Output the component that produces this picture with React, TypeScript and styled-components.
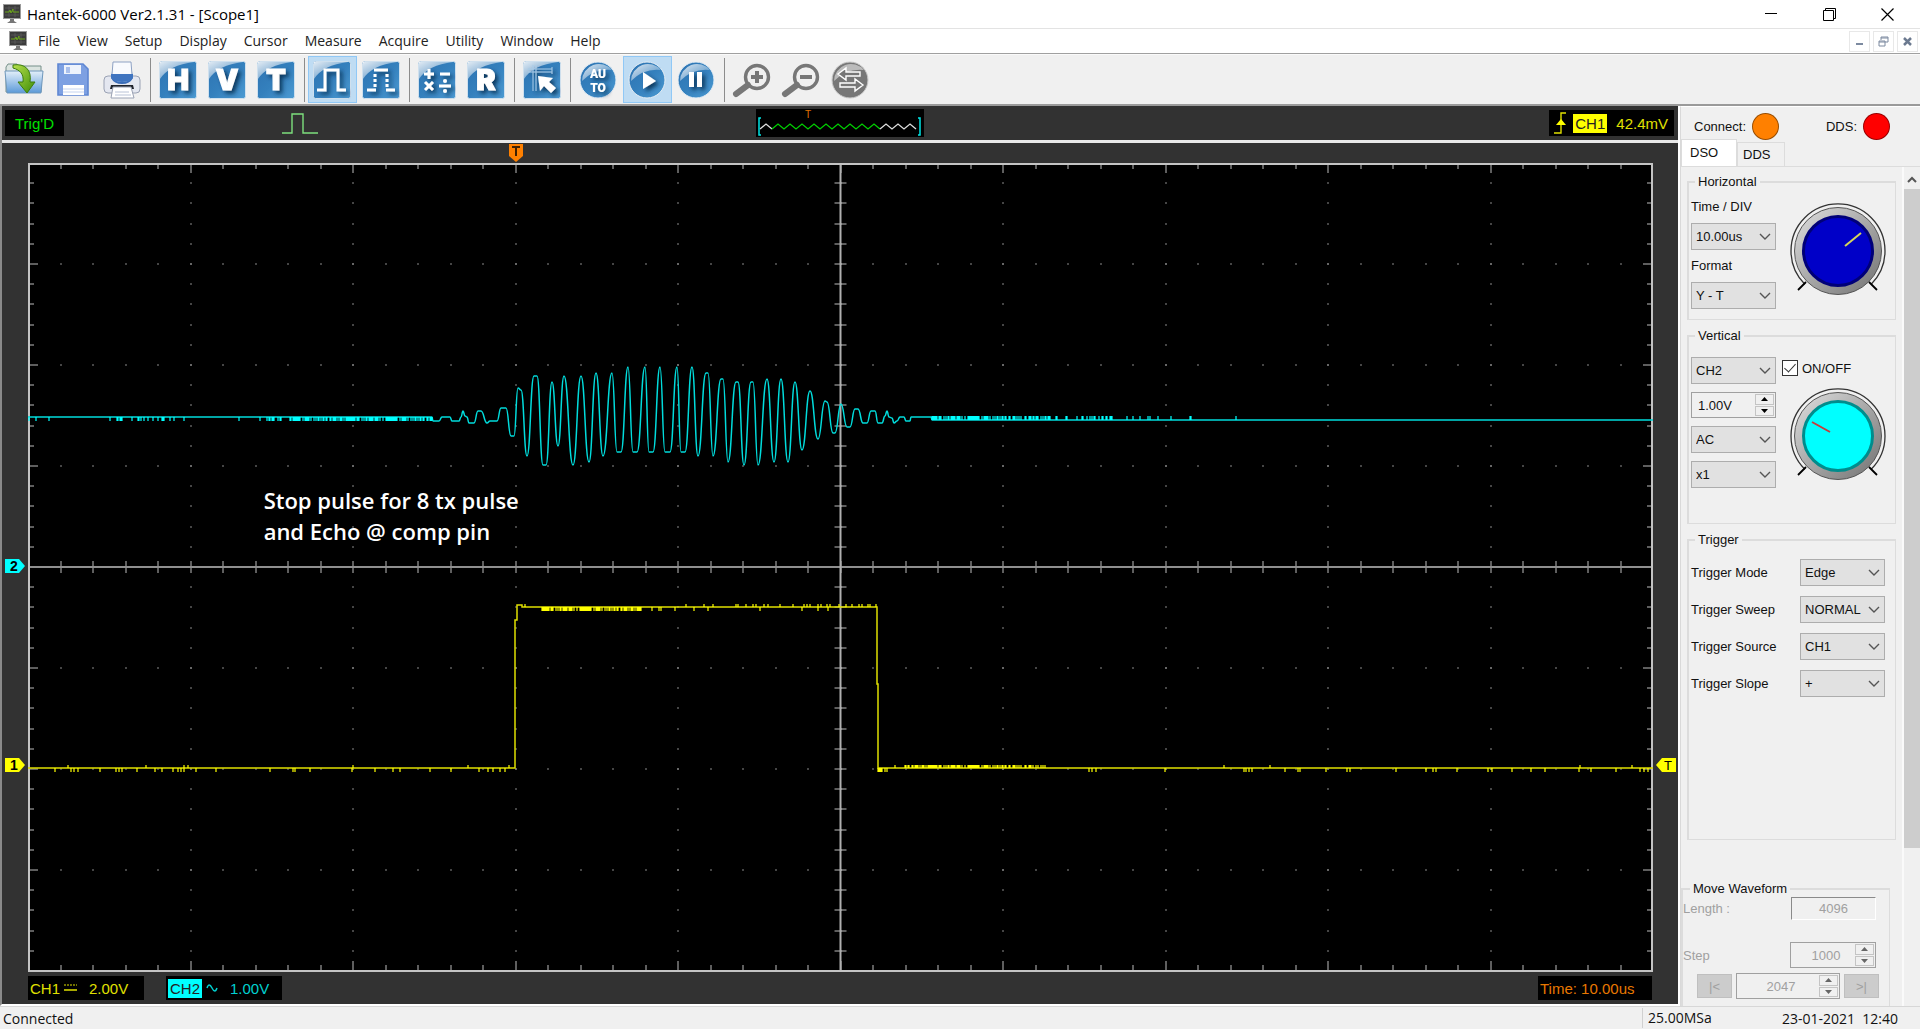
import React, { ReactNode, useState } from "react";
import styled, { createGlobalStyle } from "styled-components";

const GlobalStyle = createGlobalStyle`
    * {
        box-sizing: border-box;
    }

    body {
        margin: 0;
        background-color: #f0f0f0;
        color: #111;
        font-family: "Liberation Sans", Arial, sans-serif;
        font-size: 13px;
    }

    button, input, select {
        font: inherit;
        color: inherit;
    }
`;

const uiFont = '"Open Sans", "Noto Sans", sans-serif';

const Window = styled.div`
    display: flex;
    flex-direction: column;
    height: 100vh;
    overflow: hidden;
`;

const TitleBar = styled.header`
    display: flex;
    align-items: center;
    height: 29px;
    flex-shrink: 0;
    padding-left: 3px;
    background-color: #fff;
    border-bottom: 1px solid #e3e3e3;
`;

const Title = styled.h1`
    flex-grow: 1;
    margin: 0 0 0 6px;
    font-family: ${uiFont};
    font-size: 15px;
    font-weight: 400;
    color: #000;
`;

const WindowButton = styled.button`
    display: flex;
    align-items: center;
    justify-content: center;
    width: 58px;
    height: 28px;
    padding: 0;
    border: none;
    background: none;
`;

const WindowButtons = styled.div`
    display: flex;
    padding-right: 4px;
`;

const MenuBar = styled.nav`
    display: flex;
    align-items: center;
    gap: 17px;
    height: 25px;
    flex-shrink: 0;
    padding-left: 9px;
    background-color: #fff;
    border-bottom: 1px solid #a0a0a0;
`;

const MenuItem = styled.button`
    padding: 0;
    border: none;
    background: none;
    font-family: ${uiFont};
    font-size: 14px;
    line-height: 20px;
    color: #222;
`;

const MenuIcon = styled.span`
    display: flex;
    margin-right: -6px;
`;

const ChildButtons = styled.div`
    display: flex;
    gap: 3px;
    margin-left: auto;
    padding-right: 2px;
`;

const ChildButton = styled.button`
    display: flex;
    align-items: center;
    justify-content: center;
    width: 21px;
    height: 21px;
    padding: 0;
    border: 1px solid #e8e8e8;
    background-color: #fff;
`;

const Toolbar = styled.div`
    display: flex;
    align-items: center;
    height: 52px;
    flex-shrink: 0;
    background-color: #f0f0f0;
    border-top: 1px solid #fafafa;
    border-bottom: 2px solid #9a9a9a;
`;

const ToolButton = styled.button<{ $active?: boolean }>`
    display: flex;
    align-items: center;
    justify-content: center;
    width: 49px;
    height: 47px;
    padding: 0 1px 0 0;
    border: 1px solid ${(p) => (p.$active ? "#90c8f6" : "transparent")};
    background-color: ${(p) => (p.$active ? "#bfdcf3" : "transparent")};
`;

const Separator = styled.span`
    width: 1px;
    height: 44px;
    margin: 0 3px;
    background-color: #8c8c8c;
`;

const Workspace = styled.main`
    display: flex;
    flex: 1;
    min-height: 0;
`;

const ScopePanel = styled.section`
    display: flex;
    flex-direction: column;
    flex: 1;
    min-width: 0;
    background-color: #323232;
    border-left: 2px solid #8a8a8a;
    border-right: 2px solid #fff;
    border-bottom: 2px solid #fff;
`;

const ScopeHeader = styled.div`
    display: grid;
    grid-template-columns: 1fr auto 1fr;
    align-items: center;
    height: 37px;
    padding: 0 4px 0 3px;
    border-bottom: 3px solid #e8e8e8;
`;

const HeaderLeft = styled.div`
    display: flex;
    align-items: center;
    gap: 217px;
`;

const Readout = styled.div<{ $color: string }>`
    display: flex;
    align-items: center;
    height: 26px;
    padding: 0 10px;
    background-color: #000;
    color: ${(p) => p.$color};
    font-size: 15px;
    white-space: nowrap;
`;

const TriggerReadout = styled(Readout)`
    justify-self: end;
    padding: 0 6px 0 4px;
`;

const TriggerLevel = styled.span`
    margin-left: 9px;
`;

const ChannelTag = styled.span<{ $color: string }>`
    padding: 1px 2px;
    background-color: ${(p) => p.$color};
    color: #222;
`;

const ScopeBody = styled.div`
    flex: 1;
    min-height: 0;
    padding: 20px 25px 0 26px;
`;

const Plot = styled.div`
    position: relative;
    height: 100%;
    background-color: #000;
`;

const PlotSvg = styled.svg`
    display: block;
    width: 100%;
    height: 100%;
`;

const Annotation = styled.p`
    position: absolute;
    left: 14.5%;
    top: 39.8%;
    margin: 0;
    font-family: ${uiFont};
    font-size: 22px;
    font-weight: 600;
    line-height: 31px;
    color: #fff;
    white-space: pre-line;
`;

const SideMarker = styled.svg<{ $top: string; $side: "left" | "right" }>`
    position: absolute;
    top: ${(p) => p.$top};
    ${(p) => (p.$side === "left" ? "right: 100%; margin-right: 3px;" : "left: 100%; margin-left: 3px;")}
    transform: translateY(-50%);
`;

const TopMarker = styled.svg`
    position: absolute;
    left: 30%;
    bottom: 100%;
    transform: translateX(-50%);
`;

const ScopeFooter = styled.div`
    display: flex;
    gap: 22px;
    padding: 4px 26px 4px 26px;
`;

const FooterReadout = styled(Readout)`
    width: 116px;
    height: 24px;
    gap: 4px;
    padding: 0 2px;

    &:last-child {
        margin-left: auto;
        width: 114px;
    }
`;

const FooterValue = styled.span`
    margin-left: 8px;
`;

const Sidebar = styled.aside`
    display: flex;
    flex-direction: column;
    width: 240px;
    flex-shrink: 0;
    border-left: 1px solid #d9d9d9;
    border-top: 1px solid #fff;
`;

const Indicators = styled.div`
    display: flex;
    justify-content: space-between;
    align-items: center;
    height: 33px;
    padding: 5px 30px 0 13px;
`;

const Indicator = styled.span`
    display: flex;
    align-items: center;
    gap: 6px;
`;

const Lamp = styled.span<{ $color: string }>`
    width: 27px;
    height: 27px;
    border: 1px solid #0006;
    border-radius: 50%;
    background-color: ${(p) => p.$color};
`;

const Tabs = styled.div`
    display: flex;
    align-items: flex-end;
    height: 27px;
    border-bottom: 1px solid #dcdcdc;
`;

const Tab = styled.button<{ $active: boolean }>`
    width: ${(p) => (p.$active ? 56 : 48)}px;
    height: ${(p) => (p.$active ? 27 : 24)}px;
    padding: 0 0 ${(p) => (p.$active ? 2 : 0)}px ${(p) => (p.$active ? 8 : 5)}px;
    border: 1px solid #dcdcdc;
    border-bottom: none;
    background-color: ${(p) => (p.$active ? "#fff" : "#f0f0f0")};
    text-align: left;
`;

const TabBody = styled.div`
    display: flex;
    flex: 1;
    min-height: 0;
`;

const Controls = styled.div`
    flex: 1;
    min-width: 0;
    overflow: hidden;
    padding-top: 7px;
    border-right: 2px solid #fafafa;
`;

const Group = styled.fieldset<{ $height: number }>`
    display: flex;
    justify-content: space-between;
    height: ${(p) => p.$height}px;
    margin: 0 6px 8px;
    padding: 4px 7px 0 2px;
    border: 1px solid #dcdcdc;
    border-width: 2px 1px 1px 2px;

    legend {
        margin-left: 4px;
        padding: 0 3px;
        line-height: 16px;
    }
`;

const TriggerGroup = styled(Group)`
    flex-direction: column;
    justify-content: flex-start;
    gap: 10px;
    padding: 11px 10px 0 2px;
`;

const MoveGroup = styled(Group)`
    flex-direction: column;
    justify-content: flex-start;
    margin: 41px 12px 0 0;
    padding: 0 13px 0 0;
    color: #a0a0a0;

    legend {
        margin-left: 7px;
        color: #111;
    }
`;

const Stack = styled.div<{ $gap: number; $top: number }>`
    display: flex;
    flex-direction: column;
    gap: ${(p) => p.$gap}px;
    padding-top: ${(p) => p.$top}px;
`;

const DialColumn = styled.div<{ $top: number }>`
    display: flex;
    flex-direction: column;
    gap: 12px;
    padding-top: ${(p) => p.$top}px;
`;

const FieldLabel = styled.label`
    line-height: 18px;
`;

const FieldRow = styled.div`
    display: flex;
    align-items: center;
    justify-content: space-between;
`;

const MoveRow = styled(FieldRow)<{ $gap: number }>`
    margin-bottom: ${(p) => p.$gap}px;
`;

const MoveButtons = styled.div`
    display: flex;
    align-items: center;
    justify-content: flex-end;
    gap: 4px;
    margin-right: -3px;
`;

const SelectBox = styled.span`
    position: relative;
    display: block;
    width: 85px;

    select {
        display: block;
        width: 100%;
        height: 27px;
        padding: 0 20px 0 4px;
        border: 1px solid #adadad;
        border-radius: 0;
        background-color: #e1e1e1;
        appearance: none;
        text-overflow: clip;
    }

    svg {
        position: absolute;
        right: 5px;
        top: 10px;
        pointer-events: none;
    }
`;

const CheckLabel = styled.label`
    display: flex;
    align-items: center;
    gap: 4px;

    input {
        display: grid;
        place-items: center;
        width: 16px;
        height: 16px;
        margin: 0;
        border: 1px solid #333;
        background-color: #fff;
        appearance: none;
    }

    input:checked::after {
        content: "";
        width: 5px;
        height: 10px;
        margin-bottom: 3px;
        border: solid #333;
        border-width: 0 1px 1px 0;
        transform: rotate(42deg);
    }
`;

const SpinBox = styled.span<{ $width: number; $center?: boolean }>`
    display: flex;
    width: ${(p) => p.$width}px;
    height: 26px;
    padding: 1px;
    border: 1px solid #a0a0a0;
    background-color: #f0f0f0;

    input {
        flex: 1;
        min-width: 0;
        padding: 0 0 0 5px;
        border: none;
        background: none;
        text-align: ${(p) => (p.$center ? "center" : "left")};
    }
`;

const SpinButtons = styled.span`
    display: flex;
    flex-direction: column;
    width: 19px;
    gap: 1px;

    button {
        display: flex;
        align-items: center;
        justify-content: center;
        flex: 1;
        padding: 0;
        border: 1px solid #c4c4c4;
        background-color: #f0f0f0;
    }
`;

const LengthInput = styled.input`
    width: 85px;
    height: 23px;
    border: 1px solid #fff;
    border-top-color: #8a8a8a;
    border-left-color: #8a8a8a;
    background-color: #f0f0f0;
    text-align: center;
`;

const StepButton = styled.button`
    width: 35px;
    height: 24px;
    padding: 0;
    border: 1px solid #bfbfbf;
    background-color: #ccc;
`;

const ScrollBar = styled.div`
    display: flex;
    flex-direction: column;
    width: 16px;
`;

const ScrollArrow = styled.button`
    height: 22px;
    padding: 0;
    border: none;
    background: none;
`;

const ScrollThumb = styled.div`
    height: 78.6%;
    background-color: #cdcdcd;
`;

const StatusBar = styled.footer`
    display: flex;
    align-items: center;
    height: 23px;
    flex-shrink: 0;
    padding: 0 22px 0 3px;
    border-top: 1px solid #d7d7d7;
    font-family: ${uiFont};
    font-size: 14px;
`;

const StatusCell = styled.span`
    margin-left: auto;
    width: 140px;
    padding-left: 5px;
    border-left: 1px solid #d0d0d0;
    line-height: 20px;
`;

const StatusTime = styled.span`
    white-space: pre;
`;

const MonitorIcon = () => (
  <svg width="18" height="20" viewBox="0 0 18 20">
    <rect x="0.5" y="0.5" width="17" height="14" fill="#3c3c3c" stroke="#9a9a9a" />
    <path d="M2 4h14M2 11h14M6 2v11M12 2v11" stroke="#666" strokeWidth="0.6" />
    <path d="M2 8h4l1-2 1 3 2-4v3h6" fill="none" stroke="#6da81a" />
    <path d="M7 15h4v2l3 2H4l3-2z" fill="#777" />
  </svg>
);

const FolderIcon = () => (
  <svg width="40" height="38" viewBox="0 0 40 38">
    <defs>
      <linearGradient id="folder" x1="0" y1="0" x2="0" y2="1">
        <stop offset="0" stopColor="#e3effa" />
        <stop offset="1" stopColor="#5c9ad8" />
      </linearGradient>
      <linearGradient id="arrow" x1="0" y1="0" x2="1" y2="1">
        <stop offset="0" stopColor="#b7e04c" />
        <stop offset="1" stopColor="#3d8d08" />
      </linearGradient>
    </defs>
    <path d="M2 31V6l2-3h9l2 2h22v26z" fill="#dbe4e0" stroke="#76908a" />
    <path d="M1 10h38l-2 22H3z" fill="url(#folder)" stroke="#6f97bb" />
    <path d="M9 4c12-2 19 5 17 17h5l-8 11-9-11h5c1-8-3-12-10-14z" fill="url(#arrow)" stroke="#3c7d0c" />
  </svg>
);

const SaveIcon = () => (
  <svg width="32" height="33" viewBox="0 0 32 33">
    <path d="M1 1h25l5 5v26H1z" fill="#7da0e2" stroke="#5f87d3" strokeWidth="1.6" />
    <path d="M7 2h17v9H7z" fill="#eef3fc" />
    <path d="M9 4h4v6H9z" fill="#a9bfec" />
    <path d="M6 22h21v10H6z" fill="#fff" />
    <path d="M6 26h21M6 29h21" stroke="#c4d3ef" />
  </svg>
);

const PrintIcon = () => (
  <svg width="38" height="38" viewBox="0 0 38 38">
    <path d="M10 1h18l1 13H9z" fill="#f8fafe" stroke="#8ea2c4" />
    <rect x="1" y="15" width="36" height="17" rx="4" fill="#e4e7f0" stroke="#9aa2b4" />
    <path d="M8 10q0 11 11 11t11-11v7q-3 6-11 6T8 17z" fill="#3a6db8" />
    <path d="M8 13h22v4q-3 4-11 4T8 17z" fill="#3f74c0" />
    <path d="M8 24h22l1 4H7z" fill="#20242c" />
    <path d="M10 26h18l3 11H8z" fill="#fff" stroke="#9aa2b4" />
    <path d="M12 31h14M12 34h16" stroke="#b8c2d6" />
  </svg>
);

const Tile = ({ children, round }: { children: ReactNode; round?: boolean }) => (
  <svg width="38" height="38" viewBox="0 0 38 38">
    <defs>
      <linearGradient id="tile" x1="0" y1="0" x2="1" y2="1">
        <stop offset="0" stopColor="#2d73b2" />
        <stop offset="0.5" stopColor="#3480bd" />
        <stop offset="1" stopColor="#4c9bd3" />
      </linearGradient>
      <linearGradient id="gloss" x1="0" y1="0" x2="1" y2="1">
        <stop offset="0" stopColor="#fff" stopOpacity="0.85" />
        <stop offset="1" stopColor="#fff" stopOpacity="0.05" />
      </linearGradient>
      <filter id="shade" x="-30%" y="-30%" width="180%" height="180%">
        <feDropShadow dx="3" dy="3" stdDeviation="2" floodColor="#062846" floodOpacity="0.8" />
      </filter>
    </defs>
    {round ? (
      <>
        <circle cx="19" cy="19" r="18" fill="url(#tile)" stroke="#e6eef5" />
        <path d="M3 20A17 17 0 0 1 33 9Q16 7 3 20z" fill="url(#gloss)" />
      </>
    ) : (
      <>
        <rect x="0.5" y="0.5" width="37" height="37" rx="2" fill="url(#tile)" stroke="#cfe0ee" />
        <path d="M1 1h34Q10 4 1 18z" fill="url(#gloss)" />
      </>
    )}
    <g filter="url(#shade)" fill="#fff">{children}</g>
  </svg>
);

const Letter = ({ children }: { children: string }) => (
  <Tile>
    <text x="19" y="29" textAnchor="middle" fontFamily="Inter, sans-serif" fontWeight="900" fontSize="29" stroke="#fff" strokeWidth="1">
      {children}
    </text>
  </Tile>
);

const Magnifier = ({ plus }: { plus?: boolean }) => (
  <svg width="40" height="36" viewBox="0 0 40 36" fill="none" stroke="#777">
    <circle cx="25" cy="15" r="11.5" strokeWidth="3.4" />
    <path d="M16 23L4 32" strokeWidth="6" strokeLinecap="round" />
    <path d={plus ? "M19 15h12M25 9v12" : "M19 15h12"} strokeWidth="4" />
  </svg>
);

const SwapIcon = () => (
  <svg width="38" height="38" viewBox="0 0 38 38">
    <circle cx="19" cy="19" r="18" fill="#777" stroke="#ccc" />
    <path d="M3 20A17 17 0 0 1 33 9Q16 7 3 20z" fill="#bbb" />
    <path d="M7 13l8-6v4h14v4H15v4zM32 24l-8-6v4H9v4h15v4z" fill="#777" stroke="#fff" strokeWidth="1.4" />
  </svg>
);

const Chevron = () => (
  <svg width="12" height="8" viewBox="0 0 12 8">
    <path d="M1 1l5 5 5-5" fill="none" stroke="#555" strokeWidth="1.4" />
  </svg>
);

interface DropDownProps {
  id: string;
  label?: string;
  options: string[];
}

const DropDown: React.FC<DropDownProps> = ({ id, label, options }) => (
  <SelectBox>
    <select id={id} aria-label={label} defaultValue={options[0]}>
      {options.map((option) => (
        <option key={option}>{option}</option>
      ))}
    </select>
    <Chevron />
  </SelectBox>
);

interface SpinnerProps {
  id: string;
  label?: string;
  value: string;
  width: number;
  disabled?: boolean;
}

const Spinner: React.FC<SpinnerProps> = ({ id, label, value, width, disabled }) => (
  <SpinBox $width={width} $center={disabled}>
    <input id={id} aria-label={label} defaultValue={value} disabled={disabled} />
    <SpinButtons>
      <button aria-label="Increase" disabled={disabled}>
        <svg width="7" height="4"><path d="M0 4l3.5-4 3.5 4z" fill={disabled ? "#666" : "#000"} /></svg>
      </button>
      <button aria-label="Decrease" disabled={disabled}>
        <svg width="7" height="4"><path d="M0 0l3.5 4 3.5-4z" fill={disabled ? "#666" : "#000"} /></svg>
      </button>
    </SpinButtons>
  </SpinBox>
);

interface KnobProps {
  color: string;
  rim: string;
  hand: string;
  path: string;
}

const Knob: React.FC<KnobProps> = ({ color, rim, hand, path }) => (
  <svg width="106" height="94" viewBox="-7 0 106 94">
    <defs>
      <linearGradient id="knobRing" x1="0" y1="0" x2="1" y2="1">
        <stop offset="0" stopColor="#e0e0e0" />
        <stop offset="1" stopColor="#707070" />
      </linearGradient>
    </defs>
    <path d="M15.8 81.2A47 47 0 1 1 82.2 81.2" fill="none" stroke="#333" strokeWidth="1.3" />
    <circle cx="49" cy="48" r="43.5" fill="url(#knobRing)" stroke="#555" />
    <circle cx="49" cy="48" r="34.5" fill={color} stroke={rim} strokeWidth="3" />
    <path d="M9 87l8-8M88 87l-8-8" stroke="#000" strokeWidth="1.8" />
    <path d={path} stroke={hand} strokeWidth="2" />
  </svg>
);

// Grid of 10 x 8 divisions, five minor ticks each
const LEFT = 28;
const TOP = 163;
const WIDTH = 1625;
const HEIGHT = 808;
const CENTER_X = LEFT + WIDTH / 2;
const CENTER_Y = TOP + HEIGHT / 2;

const gridPath = () => {
  let ticks = "";
  let dots = "";
  for (let i = 1; i < 50; i++) {
    const x = Math.round(LEFT + (i * WIDTH) / 50);
    const size = i % 5 === 0 ? 10 : 6;
    ticks += `M${x} ${TOP}v${size}M${x} ${TOP + HEIGHT}v${-size}M${x} ${CENTER_Y - 6}v12`;
    for (let row = 1; row < 8; row++) {
      dots += `M${x - 1} ${Math.round(TOP + (row * HEIGHT) / 8)}h2`;
    }
  }
  for (let i = 1; i < 40; i++) {
    const y = Math.round(TOP + (i * HEIGHT) / 40);
    const size = i % 5 === 0 ? 10 : 6;
    ticks += `M${LEFT} ${y}h${size}M${LEFT + WIDTH} ${y}h${-size}M${CENTER_X - 6} ${y}h12`;
    for (let col = 1; col < 10; col++) {
      dots += `M${Math.round(LEFT + (col * WIDTH) / 10) - 1} ${y}h2`;
    }
  }
  return { ticks, dots };
};

const { ticks, dots } = gridPath();

const spikes = (y: number, height: number, xs: number[]) => xs.map((x) => `M${x} ${y}v${height}`).join("");

// Dense noise between two positions, uneven but repeatable
const noise = (y: number, height: number, from: number, to: number, density: number) => {
  const xs: number[] = [];
  for (let x = from; x <= to; x++) {
    if (((x * x * x + x * 7919) % 97) / 97 < density) xs.push(x);
  }
  return spikes(y, height, xs);
};

// Rounded peaks and troughs: every point is an extreme of the curve
const smooth = (points: number[][]) =>
  points
    .map(([x, y], i) => {
      if (i === 0) return `M${x} ${y}`;
      const [px, py] = points[i - 1];
      const mid = (px + x) / 2;
      return `C${mid} ${py} ${mid} ${y} ${x} ${y}`;
    })
    .join("");

const ECHO = smooth([
  [28, 417], [432, 417], [433, 421], [439, 421], [442, 417], [450, 417], [452, 421], [459, 421], [461, 417],
  [463, 411], [465, 416], [467, 417], [469, 423], [474, 423], [478, 411], [481, 411], [487, 423], [490, 421],
  [497, 421], [501, 408], [506, 408], [511, 436], [514, 436], [518, 388], [521, 390], [527, 456], [534, 376],
  [537, 376], [543, 465], [546, 465], [552, 382], [558, 446], [564, 376], [573, 465], [581, 376], [589, 462],
  [596, 373], [603, 456], [612, 373], [617, 452], [621, 452], [628, 367], [633, 452], [637, 452], [645, 367],
  [649, 452], [653, 452], [660, 367], [665, 452], [670, 452], [677, 367], [681, 452], [685, 452], [692, 367],
  [698, 456], [706, 373], [708, 373], [713, 456], [721, 379], [723, 379], [728, 462], [736, 382], [738, 382],
  [744, 465], [751, 382], [753, 382], [758, 465], [767, 379], [774, 462], [781, 379], [788, 462], [795, 382],
  [802, 450], [810, 391], [818, 439], [825, 401], [827, 402], [833, 433], [835, 433], [841, 404], [847, 427],
  [850, 427], [855, 409], [858, 409], [863, 423], [867, 423], [871, 411], [875, 411], [878, 423], [882, 423],
  [885, 416], [887, 411], [889, 417], [892, 418], [894, 423], [897, 421], [900, 417], [904, 417], [906, 421],
  [910, 421], [911, 417], [931, 417], [932, 420], [1653, 420],
]);

const ECHO_NOISE =
  spikes(417, 4, [29, 36, 49, 110, 117, 118, 120, 121, 122, 132, 138, 139, 141, 144, 148, 153, 158, 162, 163, 164, 170, 174, 184, 239, 260]) +
  noise(417, 4, 266, 300, 0.5) +
  noise(417, 4, 301, 432, 0.7) +
  noise(420, -4, 932, 1010, 0.7) +
  noise(420, -4, 1011, 1050, 0.5) +
  noise(420, -4, 1056, 1068, 0.5) +
  noise(420, -4, 1082, 1112, 0.5) +
  spikes(420, -4, [1077, 1127, 1133, 1140, 1148, 1150, 1158, 1171, 1190, 1191, 1236]);

const PULSE = "28,768 515,768 515,620 517,620 517,605 522,605 522,607 877,607 877,684 878,684 878,768 1653,768";

const PULSE_NOISE =
  spikes(768, 4, [55, 71, 74, 78, 100, 116, 119, 122, 137, 155, 162, 173, 178, 181, 184, 196, 216, 270, 293, 295, 310, 352, 375, 393, 400, 430, 451, 479, 488, 493, 500, 505]) +
  spikes(768, -3, [68, 146, 184, 188, 353, 468, 509, 895]) +
  noise(607, 4, 542, 641, 0.7) +
  spikes(607, 4, [652, 659, 661, 675, 694, 708, 760, 802, 818, 828]) +
  spikes(607, -3, [525, 686, 704, 713, 736, 738, 746, 753, 756, 764, 768, 780, 793, 804, 807, 810, 818, 821, 827, 830, 839, 846, 852, 859, 862, 868, 870, 876]) +
  noise(768, 4, 878, 887, 0.7) +
  noise(768, -3, 905, 1010, 0.7) +
  noise(768, -3, 1011, 1045, 0.4) +
  spikes(768, 4, [1089, 1092, 1096, 1165, 1244, 1246, 1249, 1252, 1285, 1298, 1300, 1326, 1347, 1350, 1396, 1426, 1433, 1436, 1457, 1488, 1492, 1512, 1531, 1545, 1579, 1591, 1616, 1640, 1644, 1648]) +
  spikes(768, -3, [1224, 1270, 1580, 1632]);

const zigzag = (from: number, teeth: number) => `M${from} 20` + "l6 -5l6 5".repeat(teeth);

const MENUS = ["File", "View", "Setup", "Display", "Cursor", "Measure", "Acquire", "Utility", "Window", "Help"];

const Scope = () => (
  <ScopePanel>
    <ScopeHeader>
      <HeaderLeft>
        <Readout $color="#00e000">Trig'D</Readout>
        <svg width="38" height="24" viewBox="0 0 38 24">
          <path d="M1 22h10V3h11v19h15" fill="none" stroke="#7de07d" strokeWidth="1.4" />
        </svg>
      </HeaderLeft>
      <svg width="168" height="28" viewBox="0 0 168 28">
        <rect width="168" height="28" fill="#000" />
        <path d={zigzag(4, 1)} fill="none" stroke="#ddd" strokeWidth="1.3" />
        <path d={zigzag(16, 9)} fill="none" stroke="#00d000" strokeWidth="1.3" />
        <path d={zigzag(124, 3)} fill="none" stroke="#ddd" strokeWidth="1.3" />
        <path d="M5 9H3v17h2M162 9h2v17h-2" fill="none" stroke="#00e5e5" strokeWidth="1.5" />
        <text x="52" y="9" textAnchor="middle" fontSize="10" fill="#e07000">T</text>
      </svg>
      <TriggerReadout $color="#e0e000">
        <svg width="20" height="24" viewBox="0 0 20 24">
          <path d="M1 22h7V2h5" fill="none" stroke="#e0e000" strokeWidth="1.4" />
          <path d="M3 14l5-6 5 6z" fill="#ff0" />
        </svg>
        <ChannelTag $color="#ff0">CH1</ChannelTag>
        <TriggerLevel>42.4mV</TriggerLevel>
      </TriggerReadout>
    </ScopeHeader>
    <ScopeBody>
      <Plot>
        <PlotSvg viewBox="28 163 1625 809" preserveAspectRatio="none" role="img" aria-label="Oscilloscope traces">
          <path d={dots} stroke="#8a8a8a" />
          <path d={ticks} stroke="#bdbdbd" />
          <path d={`M28 ${CENTER_Y}h1625`} stroke="#8f8f8f" strokeWidth="2" />
          <path d={`M${CENTER_X} 164v808`} stroke="#b0b0b0" strokeWidth="2" />
          <rect x="29" y="164" width="1623" height="807" fill="none" stroke="#c4c4c4" strokeWidth="2" />
          <polyline points={PULSE} fill="none" stroke="#e0e000" strokeWidth="1.5" />
          <path d={PULSE_NOISE} stroke="#ff0" strokeWidth="1.2" />
          <path d={ECHO} fill="none" stroke="#00dcdc" strokeWidth="1.5" />
          <path d={ECHO_NOISE} stroke="#0ff" strokeWidth="1.2" />
        </PlotSvg>
        <TopMarker width="16" height="20" viewBox="0 0 16 20">
          <path d="M1 1h14v12l-7 6-7-6z" fill="#ff8000" />
          <path d="M4 4h8M8 4v9" stroke="#402000" strokeWidth="2" />
        </TopMarker>
        <SideMarker $top="49.8%" $side="left" width="20" height="14" viewBox="0 0 20 14">
          <path d="M0 0h14l6 7-6 7H0z" fill="#0ff" />
          <text x="9" y="12" textAnchor="middle" fontWeight="bold" fontSize="14">2</text>
        </SideMarker>
        <SideMarker $top="74.4%" $side="left" width="20" height="14" viewBox="0 0 20 14">
          <path d="M0 0h14l6 7-6 7H0z" fill="#ff0" />
          <text x="9" y="12" textAnchor="middle" fontWeight="bold" fontSize="14">1</text>
        </SideMarker>
        <SideMarker $top="74.4%" $side="right" width="20" height="14" viewBox="0 0 20 14">
          <path d="M20 0H6L0 7l6 7h14z" fill="#ff0" />
          <text x="12" y="12" textAnchor="middle" fontSize="13">T</text>
        </SideMarker>
        <Annotation>{"Stop pulse for 8 tx pulse\nand Echo @ comp pin"}</Annotation>
      </Plot>
    </ScopeBody>
    <ScopeFooter>
      <FooterReadout $color="#e0e000">
        CH1
        <svg width="13" height="8">
          <path d="M0 1h13" stroke="#e0e000" strokeDasharray="2 1" />
          <path d="M0 6h13" stroke="#e0e000" strokeWidth="1.5" />
        </svg>
        <FooterValue>2.00V</FooterValue>
      </FooterReadout>
      <FooterReadout $color="#00d0d0">
        <ChannelTag $color="#0ff">CH2</ChannelTag>
        <svg width="12" height="10">
          <path d="M1 5q2-6 5 0t5 0" fill="none" stroke="#00d0d0" strokeWidth="1.5" />
        </svg>
        <FooterValue>1.00V</FooterValue>
      </FooterReadout>
      <FooterReadout $color="#e87800">Time: 10.00us</FooterReadout>
    </ScopeFooter>
  </ScopePanel>
);

const ControlPanel = () => {
  const [tab, setTab] = useState("DSO");
  const [channelOn, setChannelOn] = useState(true);

  return (
    <Sidebar>
      <Indicators>
        <Indicator>Connect:<Lamp $color="#ff8000" /></Indicator>
        <Indicator>DDS:<Lamp $color="#f00" /></Indicator>
      </Indicators>
      <Tabs>
        <Tab $active={tab === "DSO"} onClick={() => setTab("DSO")}>DSO</Tab>
        <Tab $active={tab === "DDS"} onClick={() => setTab("DDS")}>DDS</Tab>
      </Tabs>
      <TabBody>
        <Controls>
          <Group $height={146}>
            <legend>Horizontal</legend>
            <Stack $gap={7} $top={4}>
              <FieldLabel htmlFor="time-div">Time / DIV</FieldLabel>
              <DropDown id="time-div" options={["10.00us", "20.00us", "50.00us"]} />
              <FieldLabel htmlFor="format">Format</FieldLabel>
              <DropDown id="format" options={["Y - T", "X - Y"]} />
            </Stack>
            <DialColumn $top={9}>
              <Knob color="#0000c8" rim="#000078" hand="#d6d65a" path="M56 43l16-13" />
            </DialColumn>
          </Group>
          <Group $height={196}>
            <legend>Vertical</legend>
            <Stack $gap={8} $top={9}>
              <DropDown id="channel" label="Channel" options={["CH2", "CH1"]} />
              <Spinner id="volt-div" label="Volts per division" value="1.00V" width={85} />
              <DropDown id="coupling" label="Coupling" options={["AC", "DC", "GND"]} />
              <DropDown id="probe" label="Probe" options={["x1", "x10", "x100"]} />
            </Stack>
            <DialColumn $top={12}>
              <CheckLabel>
                <input type="checkbox" checked={channelOn} onChange={() => setChannelOn(!channelOn)} />
                ON/OFF
              </CheckLabel>
              <Knob color="#00ffff" rim="#008c8c" hand="#c83c3c" path="M23 34l18 10" />
            </DialColumn>
          </Group>
          <TriggerGroup $height={308}>
            <legend>Trigger</legend>
            <FieldRow>
              <label htmlFor="trigger-mode">Trigger Mode</label>
              <DropDown id="trigger-mode" options={["Edge", "Pulse", "Video"]} />
            </FieldRow>
            <FieldRow>
              <label htmlFor="trigger-sweep">Trigger Sweep</label>
              <DropDown id="trigger-sweep" options={["NORMAL", "AUTO", "SINGLE"]} />
            </FieldRow>
            <FieldRow>
              <label htmlFor="trigger-source">Trigger Source</label>
              <DropDown id="trigger-source" options={["CH1", "CH2"]} />
            </FieldRow>
            <FieldRow>
              <label htmlFor="trigger-slope">Trigger Slope</label>
              <DropDown id="trigger-slope" options={["+", "-"]} />
            </FieldRow>
          </TriggerGroup>
          <MoveGroup $height={140}>
            <legend>Move Waveform</legend>
            <MoveRow $gap={22}>
              <label htmlFor="length">Length :</label>
              <LengthInput id="length" defaultValue="4096" disabled />
            </MoveRow>
            <MoveRow $gap={5}>
              <label htmlFor="step">Step</label>
              <Spinner id="step" value="1000" width={86} disabled />
            </MoveRow>
            <MoveButtons>
              <StepButton disabled>|&lt;</StepButton>
              <Spinner id="position" label="Position" value="2047" width={104} disabled />
              <StepButton disabled>&gt;|</StepButton>
            </MoveButtons>
          </MoveGroup>
        </Controls>
        <ScrollBar>
          <ScrollArrow aria-label="Scroll up">
            <svg width="10" height="7" viewBox="0 0 10 7">
              <path d="M1 6l4-4 4 4" fill="none" stroke="#555" strokeWidth="2" />
            </svg>
          </ScrollArrow>
          <ScrollThumb />
        </ScrollBar>
      </TabBody>
    </Sidebar>
  );
};

const App: React.FC = () => (
  <>
    <GlobalStyle />
    <Window>
      <TitleBar>
        <MonitorIcon />
        <Title>Hantek-6000 Ver2.1.31 - [Scope1]</Title>
        <WindowButtons>
          <WindowButton aria-label="Minimize">
            <svg width="12" height="12"><path d="M0 5.5h12" stroke="#000" /></svg>
          </WindowButton>
          <WindowButton aria-label="Restore">
            <svg width="13" height="13" fill="none" stroke="#000">
              <path d="M0.5 2.5h10v10h-10zM2.5 2V0.5h10v10H11" />
            </svg>
          </WindowButton>
          <WindowButton aria-label="Close">
            <svg width="13" height="13"><path d="M0.5 0.5l12 12M12.5 0.5l-12 12" stroke="#000" strokeWidth="1.2" /></svg>
          </WindowButton>
        </WindowButtons>
      </TitleBar>
      <MenuBar>
        <MenuIcon><MonitorIcon /></MenuIcon>
        {MENUS.map((menu) => (
          <MenuItem key={menu}>{menu}</MenuItem>
        ))}
        <ChildButtons>
          <ChildButton aria-label="Minimize scope">
            <svg width="9" height="10"><path d="M1 8h7" stroke="#7c8aa0" strokeWidth="2" /></svg>
          </ChildButton>
          <ChildButton aria-label="Restore scope">
            <svg width="11" height="11" fill="none" stroke="#7c8aa0">
              <path d="M1 5h6v5H1zM3 4V1h7v5H7M1 6h6M3 2h7" />
            </svg>
          </ChildButton>
          <ChildButton aria-label="Close scope">
            <svg width="9" height="9"><path d="M1 1l7 7M8 1L1 8" stroke="#6c7a90" strokeWidth="2.5" /></svg>
          </ChildButton>
        </ChildButtons>
      </MenuBar>
      <Toolbar>
        <ToolButton aria-label="Open"><FolderIcon /></ToolButton>
        <ToolButton aria-label="Save"><SaveIcon /></ToolButton>
        <ToolButton aria-label="Print"><PrintIcon /></ToolButton>
        <Separator />
        <ToolButton aria-label="Horizontal"><Letter>H</Letter></ToolButton>
        <ToolButton aria-label="Vertical"><Letter>V</Letter></ToolButton>
        <ToolButton aria-label="Trigger"><Letter>T</Letter></ToolButton>
        <Separator />
        <ToolButton $active aria-label="Vectors">
          <Tile><path d="M4 29h8V9h13v20h8" fill="none" stroke="#fff" strokeWidth="3" /></Tile>
        </ToolButton>
        <ToolButton aria-label="Dots">
          <Tile>
            <path d="M5 29h9M24 29h9M12 9h14" stroke="#fff" strokeWidth="3" />
            <path d="M13 13v14M25 13v14" stroke="#fff" strokeWidth="3" strokeDasharray="3 2" />
          </Tile>
        </ToolButton>
        <Separator />
        <ToolButton aria-label="Math">
          <Tile>
            <path d="M6 13h10M11 8v10M22 13h10M7 21l8 8M15 21l-8 8M21 25h12" stroke="#fff" strokeWidth="3" />
            <circle cx="27" cy="20" r="2" />
            <circle cx="27" cy="30" r="2" />
          </Tile>
        </ToolButton>
        <ToolButton aria-label="Reference"><Letter>R</Letter></ToolButton>
        <Separator />
        <ToolButton aria-label="Cursor">
          <Tile>
            <path d="M5 8h24M5 11h24M10 4v26M13 4v26M29 6v7" stroke="#a9cbe8" />
            <path d="M15 15l15 2-4 4 7 6-5 5-7-7-4 5z" />
          </Tile>
        </ToolButton>
        <Separator />
        <ToolButton aria-label="Auto">
          <Tile round>
            <text x="19" y="17" textAnchor="middle" fontFamily="Roboto, sans-serif" fontWeight="900" fontSize="12">AU</text>
            <text x="19" y="31" textAnchor="middle" fontFamily="Roboto, sans-serif" fontWeight="900" fontSize="12">TO</text>
          </Tile>
        </ToolButton>
        <ToolButton $active aria-label="Run"><Tile round><path d="M15 11l13 9-13 8z" /></Tile></ToolButton>
        <ToolButton aria-label="Pause"><Tile round><path d="M12 11h5v15h-5zM20 11h5v15h-5z" /></Tile></ToolButton>
        <Separator />
        <ToolButton aria-label="Zoom in"><Magnifier plus /></ToolButton>
        <ToolButton aria-label="Zoom out"><Magnifier /></ToolButton>
        <ToolButton aria-label="Swap"><SwapIcon /></ToolButton>
      </Toolbar>
      <Workspace>
        <Scope />
        <ControlPanel />
      </Workspace>
      <StatusBar>
        Connected
        <StatusCell>25.00MSa</StatusCell>
        <StatusTime>23-01-2021  12:40</StatusTime>
      </StatusBar>
    </Window>
  </>
);

export default App;
